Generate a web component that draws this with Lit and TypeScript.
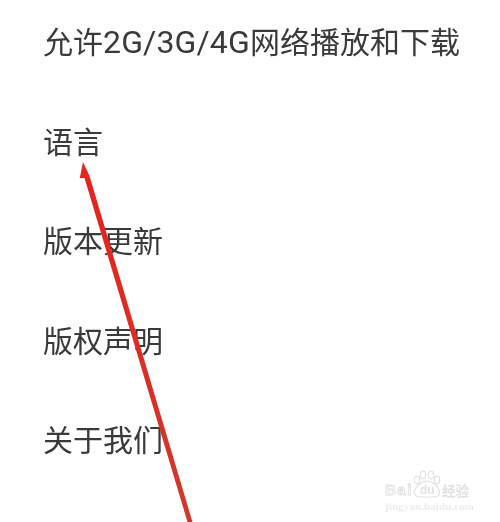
import { LitElement, html, css } from "lit";
import { customElement } from "lit/decorators.js";

const ITEMS = [
  html`允许<span class="latin">2G/3G/4G</span>网络播放和下载`,
  "语言",
  "版本更新",
  "版权声明",
  "关于我们",
];

@customElement("app-root")
export class AppRoot extends LitElement {
  static styles = css`
    :host {
      display: block;
      position: relative;
      width: 500px;
      height: 522px;
      overflow: hidden;
      background: #fff;
      font-family: "Roboto", "Noto Sans CJK SC", sans-serif;
    }
    .list {
      display: flex;
      flex-direction: column;
      padding: 18px 0 0 43px;
      filter: blur(0.35px);
    }
    .row {
      height: 99.5px;
      font-size: 30px;
      line-height: 50px;
      color: #3a3a3a;
      white-space: nowrap;
    }
    .latin {
      font-size: 32px;
      line-height: 1;
      letter-spacing: 0.15px;
    }
    .overlay {
      position: absolute;
      inset: 0;
      width: 500px;
      height: 522px;
      filter: blur(0.4px);
    }
    .mark {
      position: absolute;
      left: 380px;
      top: 464px;
      width: 112px;
      height: 52px;
      color: #ececec;
      font-family: "Liberation Sans", sans-serif;
      filter: blur(0.5px);
    }
    .mark svg {
      position: absolute;
      left: 0;
      top: 0;
    }
    .brand {
      position: absolute;
      left: 5px;
      top: 18px;
      font-size: 15px;
      line-height: 15px;
      font-weight: 700;
      letter-spacing: 1.5px;
      color: #fff;
      -webkit-text-stroke: 0.9px #dedede;
    }
    .du {
      position: absolute;
      left: 40px;
      top: 20px;
      font-size: 12px;
      line-height: 12px;
      font-weight: 700;
      color: #e2e2e2;
    }
    .cn {
      position: absolute;
      left: 62px;
      top: 19px;
      font-size: 13.500px;
      line-height: 14px;
      font-weight: 700;
      font-family: "Noto Sans CJK SC", sans-serif;
      color: #e0e0e0;
    }
    .url {
      position: absolute;
      left: 5px;
      top: 36.500px;
      font-size: 11px;
      line-height: 11px;
      font-family: "Liberation Serif", serif;
      font-weight: 700;
      letter-spacing: 0.1px;
    }
  `;

  render() {
    return html`
      <div class="list">
        ${ITEMS.map((t) => html`<div class="row">${t}</div>`)}
      </div>
      <div class="mark">
        <svg width="112" height="52" viewBox="0 0 112 52" fill="none" stroke="#e2e2e2" stroke-width="1.2">
          <ellipse cx="37" cy="16" rx="2.600" ry="3.800" />
          <ellipse cx="43" cy="11" rx="2.600" ry="3.800" />
          <ellipse cx="51" cy="11" rx="2.600" ry="3.800" />
          <ellipse cx="57" cy="16" rx="2.600" ry="3.800" />
          <path d="M47 17c-5.500 0-12.500 6-12.500 11.500 0 3 3 4.500 6.500 4.500h12c3.500 0 6.500-1.500 6.500-4.500 0-5.500-7-11.500-12.500-11.500z" />
        </svg>
        <span class="brand">Bai</span>
        <span class="du">du</span>
        <span class="cn">经验</span>
        <span class="url">jingyan.baidu.com</span>
      </div>
      <svg class="overlay" viewBox="0 0 500 522">
        <defs>
          <linearGradient id="line" gradientUnits="userSpaceOnUse" x1="85" y1="170" x2="191" y2="522">
            <stop offset="0" stop-color="#e8221c" />
            <stop offset="1" stop-color="#d0382e" />
          </linearGradient>
        </defs>
        <path d="M83 162L89.500 176L192.500 522L187.500 522L84.500 178L79.800 178Z" fill="url(#line)" />
      </svg>
    `;
  }
}
